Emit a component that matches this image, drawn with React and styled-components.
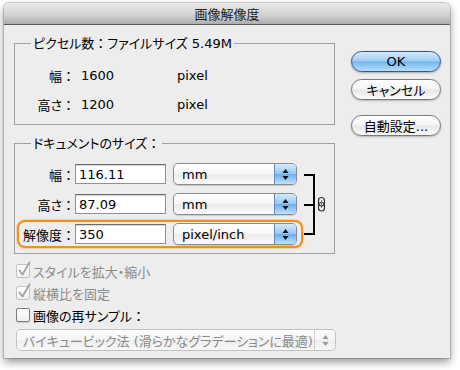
import React from "react";
import styled, { createGlobalStyle, css } from "styled-components";

const Global = createGlobalStyle`
  html, body { margin: 0; padding: 0; background: #fff; }
  body {
    font-family: "DejaVu Sans", "Noto Sans CJK JP", sans-serif;
    font-size: 13px;
    color: #000;
  }
  #root { width: 460px; height: 370px; overflow: hidden; }
`;

const Window = styled.div`
  margin: 3px 0 0 4px;
  width: 446px;
  height: 355px;
  background: #ededed;
  border-radius: 5px 5px 0 0;
  box-shadow: 0 0 0 1px rgba(0, 0, 0, 0.16), 0 4px 9px rgba(0, 0, 0, 0.42);
  display: flex;
  flex-direction: column;
`;

const TitleBar = styled.div`
  height: 21px;
  border-bottom: 1px solid #5a5a5a;
  border-radius: 5px 5px 0 0;
  background: linear-gradient(#ebebeb, #d3d3d3 55%, #adadad);
  display: flex;
  align-items: center;
  justify-content: center;
  font-family: "Noto Sans CJK JP", sans-serif;
  font-size: 13px;
  color: #1c1c1c;
`;

const Body = styled.div`
  display: flex;
  gap: 16px;
  padding: 10px 0 0 10px;
`;

const LeftCol = styled.div`
  width: 321px;
  display: flex;
  flex-direction: column;
`;

const RightCol = styled.div`
  width: 90px;
  display: flex;
  flex-direction: column;
  padding-top: 16px;
`;

const Group = styled.fieldset`
  box-sizing: border-box;
  width: 321px;
  min-width: 0;
  margin: ${(p) => p.$mt || 0}px 0 0;
  padding: ${(p) => p.$pt}px 0 ${(p) => p.$pb}px 4px;
  border: 1px solid #a2a2a2;
`;

const Legend = styled.legend`
  margin-left: 12px;
  padding: 0 2px;
  line-height: 16px;
  font-size: 13px;
  font-feature-settings: "palt";
  white-space: nowrap;
`;

const Colon = styled.span`
  font-family: "Noto Sans CJK JP", sans-serif;
  font-feature-settings: normal;
`;

const RowsWithBracket = styled.div`
  display: flex;
  align-items: flex-start;
`;

const Rows = styled.div`
  display: flex;
  flex-direction: column;
  gap: ${(p) => p.$gap}px;
`;

const Row = styled.div`
  display: flex;
  align-items: center;
  width: 282px;
  height: ${(p) => p.$h}px;
  border-radius: 6px;
  ${(p) =>
    p.$focus &&
    css`
      box-shadow: 0 0 0 2px #f48f1b, 0 0 1px 3px rgba(246, 160, 60, 0.35);
    `}
`;

const Label = styled.span`
  width: 56px;
  margin-right: ${(p) => p.$mr}px;
  text-align: right;
  font-family: "Noto Sans CJK JP", sans-serif;
  font-feature-settings: "palt";
  white-space: nowrap;
`;

const Value = styled.span`
  width: ${(p) => p.$w}px;
`;

const Field = styled.input`
  box-sizing: border-box;
  width: 91px;
  height: 20px;
  margin: 0;
  padding: 0 0 0 3px;
  border: 1px solid #929292;
  border-top-color: #6c6c6c;
  background: #fff;
  box-shadow: inset 0 1px 1px rgba(0, 0, 0, 0.18);
  font-family: "DejaVu Sans", sans-serif;
  font-size: 13px;
  color: #000;
  outline: none;
`;

const Popup = styled.div`
  box-sizing: border-box;
  margin-left: 7px;
  width: 124px;
  height: 22px;
  border: 1px solid #8c8c8c;
  border-radius: 5px;
  background: linear-gradient(#ffffff, #f6f6f6 50%, #ebebeb 52%, #fbfbfb);
  box-shadow: 0 1px 1px rgba(0, 0, 0, 0.15);
  display: flex;
  align-items: stretch;
  overflow: hidden;
`;

const PopupText = styled.span`
  flex: 1;
  padding-left: 8px;
  display: flex;
  align-items: center;
  white-space: nowrap;
`;

const Stepper = styled.span`
  width: 21px;
  border-left: 1px solid #5f8ac4;
  background: linear-gradient(#d5eafc, #97c8f3 48%, #6caeec 52%, #bfe3fd);
  display: flex;
  align-items: center;
  justify-content: center;
`;

const Bracket = styled.svg`
  flex: none;
  display: block;
`;

const CheckRow = styled.div`
  display: flex;
  align-items: center;
  gap: 3px;
  height: 18px;
  margin: ${(p) => p.$mt}px 0 0 2px;
  color: ${(p) => (p.$disabled ? "#8c8c8c" : "#000")};
  font-family: "Noto Sans CJK JP", sans-serif;
  font-feature-settings: "palt";
`;

const Box = styled.span`
  position: relative;
  box-sizing: border-box;
  width: 14px;
  height: 14px;
  border: 1px solid ${(p) => (p.$disabled ? "#c4c4c4" : "#7e7e7e")};
  border-radius: 2px;
  background: linear-gradient(#ffffff, #efefef);
  box-shadow: ${(p) => (p.$disabled ? "none" : "0 1px 1px rgba(0,0,0,0.15)")};
`;

const Tick = styled.svg`
  position: absolute;
  left: 1px;
  top: -4px;
`;

const BottomPopup = styled.div`
  box-sizing: border-box;
  margin: 5px 0 0 2px;
  width: 320px;
  height: 22px;
  border: 1px solid #c2c2c2;
  border-radius: 5px;
  background: linear-gradient(#fdfdfd, #f5f5f5 50%, #eeeeee 52%, #f8f8f8);
  color: #8a8a8a;
  display: flex;
  align-items: stretch;
`;

const BottomText = styled.span`
  flex: 1;
  padding-left: 6px;
  display: flex;
  align-items: center;
  white-space: nowrap;
  font-family: "DejaVu Sans", "Noto Sans CJK JP", sans-serif;
  font-feature-settings: "palt";
`;

const BottomStepper = styled.span`
  width: 20px;
  border-left: 1px solid #d2d2d2;
  display: flex;
  align-items: center;
  justify-content: center;
`;

const Button = styled.div`
  box-sizing: border-box;
  height: 21px;
  margin-top: ${(p) => p.$mt}px;
  border-radius: 11px;
  display: flex;
  align-items: center;
  justify-content: center;
  font-family: "DejaVu Sans", "Noto Sans CJK JP", sans-serif;
  font-feature-settings: "palt";
  font-size: 13px;
  color: #000;
  ${(p) =>
    p.$primary
      ? css`
          border: 1px solid #32578f;
          background: linear-gradient(#d3e8fb, #a3cff4 45%, #75b6ef 52%, #b6ddfb);
          box-shadow: 0 1px 2px rgba(0, 0, 0, 0.3);
        `
      : css`
          border: 1px solid #7a7a7a;
          background: linear-gradient(#ffffff, #f5f5f5 45%, #e7e7e7 52%, #fbfbfb);
          box-shadow: 0 1px 2px rgba(0, 0, 0, 0.25);
        `}
`;

const Arrows = ({ color = "#111" }) => (
  <svg width="7" height="13" viewBox="0 0 7 13">
    <path d="M3.5 1 L6.5 5 L0.5 5 Z" fill={color} />
    <path d="M3.5 12 L6.5 8 L0.5 8 Z" fill={color} />
  </svg>
);

const Select = ({ label }) => (
  <Popup>
    <PopupText>{label}</PopupText>
    <Stepper>
      <Arrows />
    </Stepper>
  </Popup>
);

const Check = ({ checked, disabled, children, mt }) => (
  <CheckRow $disabled={disabled} $mt={mt}>
    <Box $disabled={disabled}>
      {checked && (
        <Tick width="14" height="16" viewBox="0 0 14 16">
          <path
            d="M1.5 9.5 L4.5 13.5 L11.5 1.5"
            fill="none"
            stroke="#a3a3a3"
            strokeWidth="1.8"
            strokeLinecap="round"
            strokeLinejoin="round"
          />
        </Tick>
      )}
    </Box>
    <span>{children}</span>
  </CheckRow>
);

export default function App() {
  return (
    <>
      <Global />
      <Window>
        <TitleBar>画像解像度</TitleBar>
        <Body>
          <LeftCol>
            <Group $pt={13} $pb={10}>
              <Legend>
                ピクセル数<Colon>：</Colon>ファイルサイズ 5.49M
              </Legend>
              <Rows $gap={9}>
                <Row $h={20}>
                  <Label $mr={6}>
                    幅<Colon>：</Colon>
                  </Label>
                  <Value $w={96}>1600</Value>
                  <span>pixel</span>
                </Row>
                <Row $h={20}>
                  <Label $mr={6}>
                    高さ<Colon>：</Colon>
                  </Label>
                  <Value $w={96}>1200</Value>
                  <span>pixel</span>
                </Row>
              </Rows>
            </Group>

            <Group $mt={10} $pt={10} $pb={7}>
              <Legend>
                ドキュメントのサイズ<Colon>：</Colon>
              </Legend>
              <RowsWithBracket>
                <Rows $gap={6}>
                  <Row $h={24}>
                    <Label $mr={0}>
                      幅<Colon>：</Colon>
                    </Label>
                    <Field readOnly value="116.11" />
                    <Select label="mm" />
                  </Row>
                  <Row $h={24}>
                    <Label $mr={0}>
                      高さ<Colon>：</Colon>
                    </Label>
                    <Field readOnly value="87.09" />
                    <Select label="mm" />
                  </Row>
                  <Row $h={24} $focus>
                    <Label $mr={0}>
                      解像度<Colon>：</Colon>
                    </Label>
                    <Field readOnly value="350" />
                    <Select label="pixel/inch" />
                  </Row>
                </Rows>
                <Bracket width="30" height="84" viewBox="0 0 30 84">
                  <path
                    d="M3 13 H13 V72 H3 M3 43 H13"
                    fill="none"
                    stroke="#000"
                    strokeWidth="2"
                  />
                  <rect x="17.5" y="35.5" width="6" height="8.5" rx="3" fill="#e8e8e8" stroke="#333" strokeWidth="1.2" />
                  <rect x="17.5" y="40.5" width="6" height="8.5" rx="3" fill="none" stroke="#333" strokeWidth="1.2" />
                  <path d="M20.5 38 V46" stroke="#777" strokeWidth="1" />
                </Bracket>
              </RowsWithBracket>
            </Group>

            <Check checked disabled mt={8}>
              スタイルを拡大・縮小
            </Check>
            <Check checked disabled mt={4}>
              縦横比を固定
            </Check>
            <Check mt={4}>
              画像の再サンプル<Colon>：</Colon>
            </Check>

            <BottomPopup>
              <BottomText>バイキュービック法 (滑らかなグラデーションに最適)</BottomText>
              <BottomStepper>
                <Arrows color="#999" />
              </BottomStepper>
            </BottomPopup>
          </LeftCol>

          <RightCol>
            <Button $primary $mt={0}>OK</Button>
            <Button $mt={7}>キャンセル</Button>
            <Button $mt={15}>自動設定...</Button>
          </RightCol>
        </Body>
      </Window>
    </>
  );
}
